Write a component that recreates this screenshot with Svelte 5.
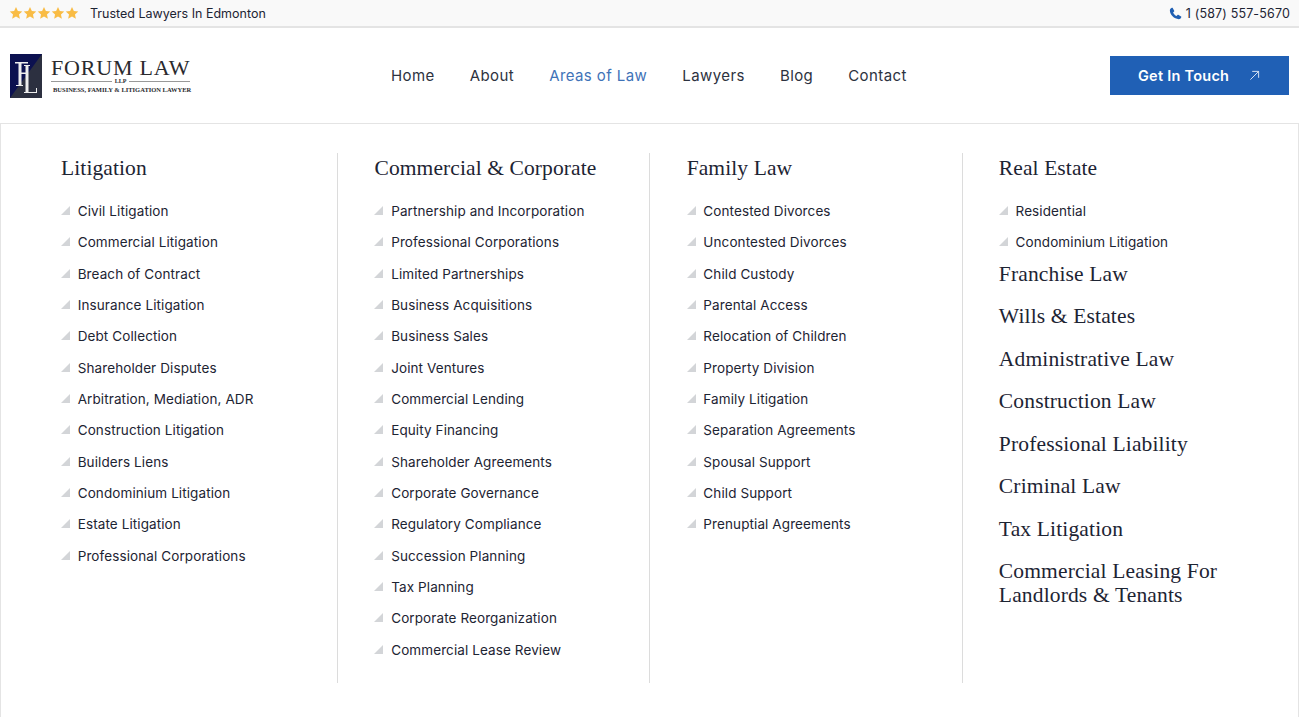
<script>
  const nav = ['Home', 'About', 'Areas of Law', 'Lawyers', 'Blog', 'Contact'];

  const columns = [
    {
      title: 'Litigation',
      items: ['Civil Litigation', 'Commercial Litigation', 'Breach of Contract', 'Insurance Litigation', 'Debt Collection', 'Shareholder Disputes', 'Arbitration, Mediation, ADR', 'Construction Litigation', 'Builders Liens', 'Condominium Litigation', 'Estate Litigation', 'Professional Corporations']
    },
    {
      title: 'Commercial & Corporate',
      items: ['Partnership and Incorporation', 'Professional Corporations', 'Limited Partnerships', 'Business Acquisitions', 'Business Sales', 'Joint Ventures', 'Commercial Lending', 'Equity Financing', 'Shareholder Agreements', 'Corporate Governance', 'Regulatory Compliance', 'Succession Planning', 'Tax Planning', 'Corporate Reorganization', 'Commercial Lease Review']
    },
    {
      title: 'Family Law',
      items: ['Contested Divorces', 'Uncontested Divorces', 'Child Custody', 'Parental Access', 'Relocation of Children', 'Property Division', 'Family Litigation', 'Separation Agreements', 'Spousal Support', 'Child Support', 'Prenuptial Agreements']
    },
    {
      title: 'Real Estate',
      items: ['Residential', 'Condominium Litigation'],
      more: ['Franchise Law', 'Wills & Estates', 'Administrative Law', 'Construction Law', 'Professional Liability', 'Criminal Law', 'Tax Litigation', 'Commercial Leasing For Landlords & Tenants']
    }
  ];
</script>

<div class="topbar">
  <div class="trust">
    <div class="stars">
      {#each [1, 2, 3, 4, 5] as s}
        <svg viewBox="0 0 24 24" width="14" height="14"><path d="M12 1.500l3.200 6.900 7.500.9-5.600 5.100 1.500 7.400L12 18.100l-6.600 3.700 1.500-7.400L1.300 9.300l7.500-.9z" fill="#f9bc45" /></svg>
      {/each}
    </div>
    <span>Trusted Lawyers In Edmonton</span>
  </div>
  <div class="phone">
    <svg viewBox="0 0 24 24" width="13" height="13"><path d="M6.600 1.600l3 5.200c.3.5.2 1-.2 1.400L7.500 10c1 2.700 3.600 5.400 6.400 6.500l1.800-1.900c.4-.4.9-.5 1.400-.2l5.200 3c.5.300.6.800.4 1.300-.8 2-2.600 3.700-4.700 3.700C9.600 22.400 1.600 14.400 1.600 6.200c0-2.100 1.700-3.900 3.700-4.800.5-.2 1-.1 1.300.2z" fill="#1f5fb3" /></svg>
    <span>1 (587) 557-5670</span>
  </div>
</div>

<header class="header">
  <div class="logo">
    <svg class="mark" viewBox="0 0 32 44" width="32" height="44">
      <rect width="32" height="44" fill="#0c1150" />
      <path d="M32 0V44H0z" fill="#2c3040" />
      <path d="M5 8h13v1.500h-6.500v9H16V20h-4.500v11H13v1H6v-1h2.500V9.500H5z" fill="#eee" />
      <path d="M14 11h6v1h-1.500v26H26v-4h1v5H14v-1h1.500V12H14z" fill="#eee" />
    </svg>
    <div class="wordmark">
      <div class="firm">FORUM LAW</div>
      <div class="llp"><i></i><b>LLP</b><i></i></div>
      <div class="tag">BUSINESS, FAMILY &amp; LITIGATION LAWYER</div>
    </div>
  </div>

  <nav class="nav">
    {#each nav as item}
      <span class:active={item === 'Areas of Law'}>{item}</span>
    {/each}
  </nav>

  <div class="cta">
    <span>Get In Touch</span>
    <svg viewBox="0 0 12 12" width="11" height="11"><path d="M1.500 10.500L10.500 1.500M3.500 1.500h7v7" fill="none" stroke="#e4ecf7" stroke-width="1" /></svg>
  </div>
</header>

<section class="panel">
  <div class="grid">
    {#each columns as col}
      <div class="col">
        <h3>{col.title}</h3>
        <ul>
          {#each col.items as item}
            <li>
              <svg viewBox="0 0 9 9" width="9" height="9"><path d="M9 0V9H0z" fill="#d3d5d8" /></svg>
              <span>{item}</span>
            </li>
          {/each}
        </ul>
        {#if col.more}
          <div class="more">
            {#each col.more as m}
              <h4>{m}</h4>
            {/each}
          </div>
        {/if}
      </div>
    {/each}
  </div>
</section>

<style>
  :global(body) {
    background: #fff;
    font-family: "Inter", "Liberation Sans", sans-serif;
    color: #1d2433;
    overflow: hidden;
  }

  .topbar {
    height: 26px;
    background: #f9f9f9;
    border-bottom: 2px solid #e4e4e4;
    display: flex;
    justify-content: space-between;
    align-items: center;
    padding: 0 9px;
    font-size: 12.500px;
  }

  .trust {
    display: flex;
    align-items: center;
    gap: 11px;
  }

  .stars {
    display: flex;
  }

  .stars svg {
    display: block;
  }

  .phone {
    display: flex;
    align-items: center;
    gap: 3px;
    letter-spacing: 0.15px;
  }

  .phone svg {
    margin-right: 1px;
  }

  .header {
    height: 95px;
    display: flex;
    align-items: center;
    padding: 0 10px;
  }

  .logo {
    display: flex;
    gap: 9px;
    width: 381px;
    align-items: center;
  }

  .mark {
    display: block;
  }

  .wordmark {
    width: 139px;
    font-family: "Liberation Serif", serif;
    color: #2a2a2e;
  }

  .firm {
    font-size: 22px;
    line-height: 20px;
    letter-spacing: 0.8px;
    white-space: nowrap;
  }

  .llp {
    display: flex;
    align-items: center;
    gap: 3px;
    font-size: 6px;
    line-height: 7px;
  }

  .llp i {
    flex: 1;
    height: 1px;
    background: #999;
  }

  .tag {
    font-size: 6.500px;
    font-weight: bold;
    line-height: 9px;
    margin-left: 2px;
    white-space: nowrap;
  }

  .nav {
    display: flex;
    gap: 35px;
    font-size: 15px;
    letter-spacing: 0.42px;
    color: #2d3240;
    flex: 1;
  }

  .nav .active {
    color: #3f73b8;
  }

  .cta {
    width: 179px;
    height: 39px;
    background: #2060b5;
    color: #fff;
    font-size: 14.500px;
    font-weight: 600;
    letter-spacing: 0.25px;
    display: flex;
    align-items: center;
    gap: 20px;
    padding-left: 28px;
    box-sizing: border-box;
  }

  .panel {
    border: 1px solid #e4e4e4;
    border-bottom: 0;
    padding: 29px 24px 0;
    height: 600px;
    box-sizing: border-box;
  }

  .grid {
    display: grid;
    grid-template-columns: repeat(4, 312.200px);
  }

  .col {
    height: 530px;
    padding-left: 36.300px;
    border-left: 1px solid #dcdcdc;
    box-sizing: border-box;
  }

  .col:first-child {
    border-left: 0;
    padding-left: 36px;
  }

  h3, h4 {
    font-family: "Liberation Serif", serif;
    font-weight: 400;
    color: #1d2433;
    margin: 0;
  }

  h3 {
    font-size: 21.500px;
    line-height: 30px;
    letter-spacing: 0.1px;
    margin-bottom: 12.150px;
  }

  ul {
    list-style: none;
    margin: 0;
    padding: 0;
  }

  li {
    display: flex;
    align-items: center;
    height: 31.360px;
    font-size: 13.500px;
    letter-spacing: 0.1px;
  }

  li svg {
    margin-right: 7.700px;
    margin-top: -1px;
    flex: none;
  }

  .more {
    margin-top: 3.850px;
  }

  h4 {
    font-size: 21.500px;
    line-height: 24px;
    letter-spacing: 0.15px;
    margin-bottom: 18.500px;
    width: 240px;
  }
</style>
